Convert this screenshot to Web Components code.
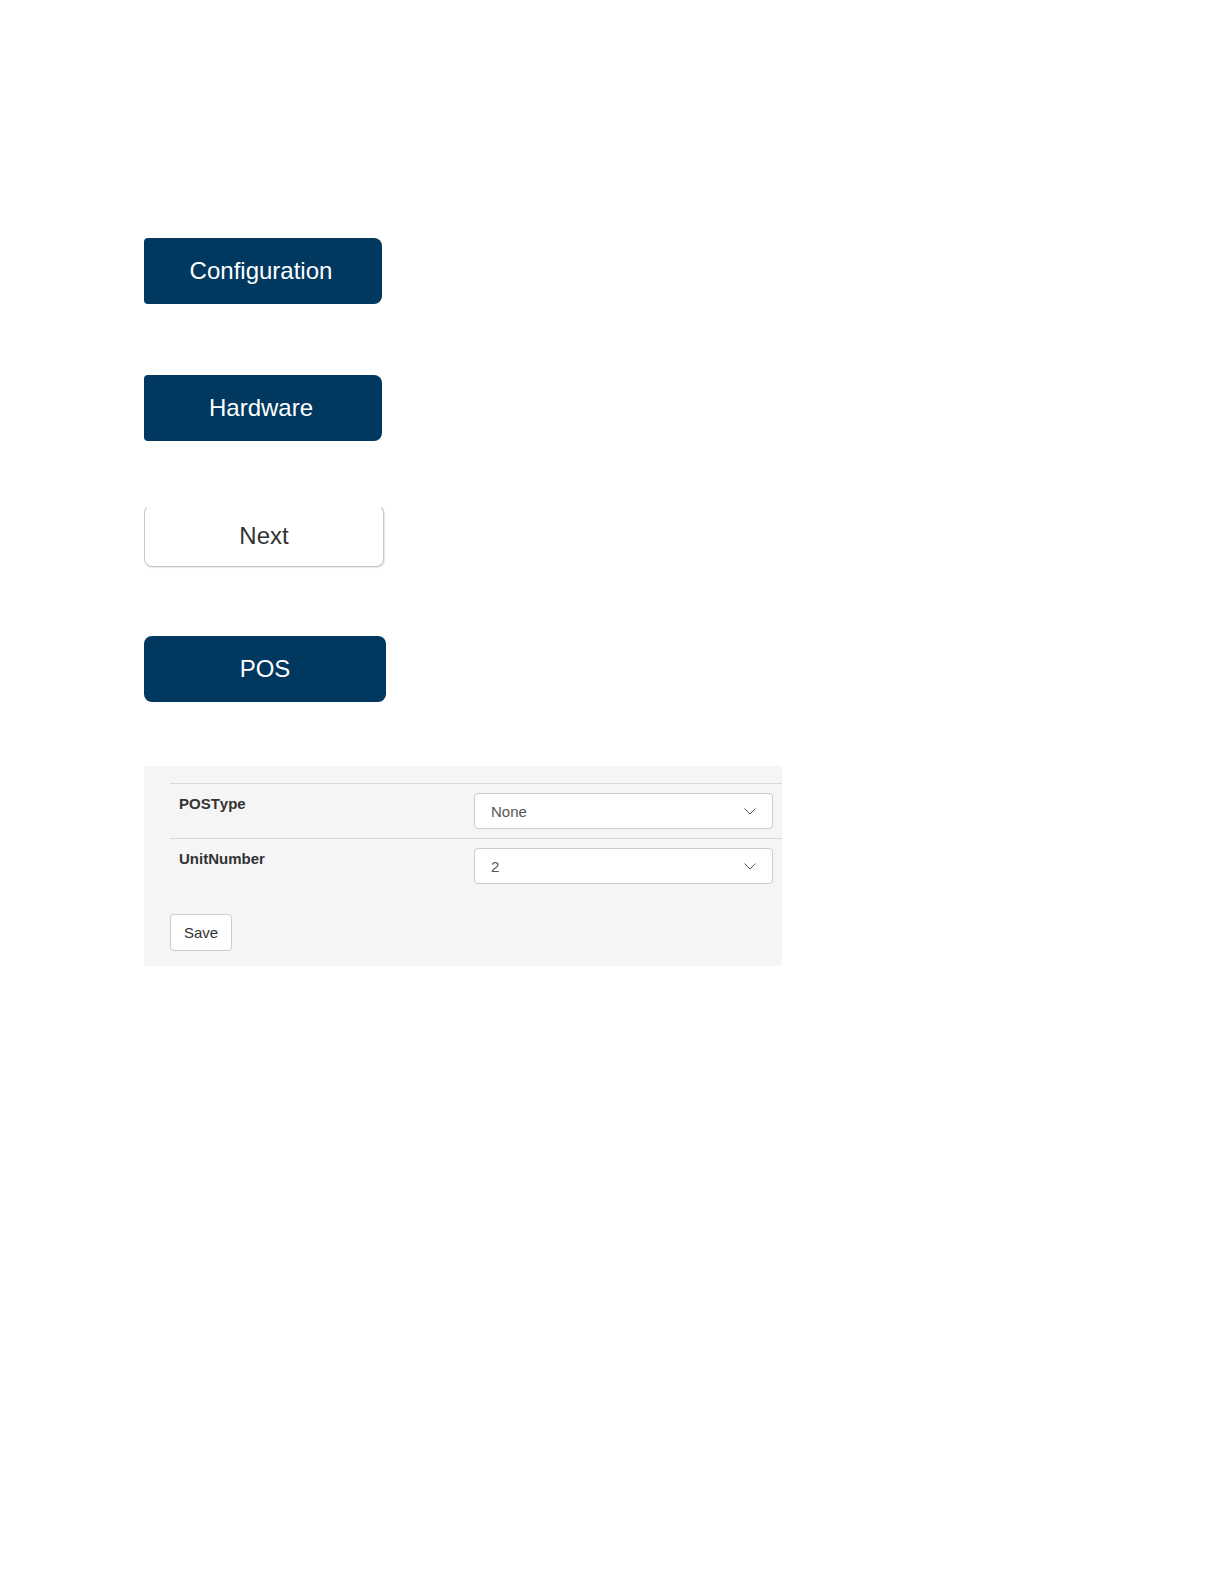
<!DOCTYPE html>
<html lang="en">
<head>
  <meta charset="UTF-8">
  <meta name="viewport" content="width=device-width, initial-scale=1">
  <title>POS configuration</title>
  <style>
    body {
      margin: 0;
      background: #fff;
      font-family: 'Liberation Sans', Arial, sans-serif;
      font-kerning: none;
    }
  </style>
</head>
<body>
  <config-page>
    <menu-button class="flush">Configuration</menu-button>
    <menu-button class="flush">Hardware</menu-button>
    <menu-button class="light">Next</menu-button>
    <menu-button>POS</menu-button>
    <pos-settings></pos-settings>
  </config-page>

  <script>
    class ConfigPage extends HTMLElement {
      constructor() {
        super();
        this.attachShadow({ mode: 'open' });
        this.shadowRoot.innerHTML = /* HTML */ `
          <style>
            :host {
              display: block;
              padding: 238px 144px 64px;
            }

            main {
              display: grid;
              grid-template-columns: minmax(0, 638px);
              grid-template-rows: 137px 130px 131px 130px auto;
              align-items: start;
              justify-items: start;
            }
          </style>
          <main><slot></slot></main>
        `;
      }
    }

    class MenuButton extends HTMLElement {
      constructor() {
        super();
        this.attachShadow({ mode: 'open' });
        this.shadowRoot.innerHTML = /* HTML */ `
          <style>
            :host {
              display: block;
              width: 100%;
              max-width: 242px;
            }

            :host(.flush) {
              max-width: 238px;
            }

            :host(.light) {
              max-width: 240px;
            }

            button {
              display: block;
              width: 100%;
              padding: 19px 8px;
              border: 0;
              border-radius: 8px;
              background: #003860;
              color: #fff;
              font: inherit;
              font-size: 24px;
              line-height: 28px;
              cursor: pointer;
            }

            :host(.flush) button {
              padding-right: 12px;
              border-radius: 4px 8px 8px 4px;
            }

            /* the top edge is left open */
            :host(.light) button {
              padding: 16px 8px;
              border: 1px solid #c6c6c6;
              border-top-color: transparent;
              background: #fff;
              color: #333;
              box-shadow: 1px 1px 1px #e6e6e6;
            }
          </style>
          <button type="button"><slot></slot></button>
        `;
      }
    }

    class PosSettings extends HTMLElement {
      constructor() {
        super();
        this.attachShadow({ mode: 'open' });
        this.shadowRoot.innerHTML = /* HTML */ `
          <style>
            :host {
              display: block;
              box-sizing: border-box;
              width: 100%;
              padding: 17px 0 15px 26px;
              background: #f5f5f5;
              color: #333;
              font-size: 15px;
              line-height: 21px;
            }

            table {
              width: 100%;
              border-collapse: separate;
              border-spacing: 0;
              table-layout: fixed;
            }

            th,
            td {
              padding: 9px;
              border-top: 1px solid #d9d9d9;
              text-align: left;
              vertical-align: top;
            }

            th {
              width: 277px;
            }

            .field {
              display: block;
              position: relative;
            }

            select {
              display: block;
              appearance: none;
              width: 100%;
              height: 36px;
              padding: 0 36px 0 16px;
              border: 1px solid #ccc;
              border-radius: 4px;
              background: #fff;
              color: #555;
              font: inherit;
            }

            svg {
              position: absolute;
              top: 14px;
              right: 16px;
              fill: none;
              stroke: #555;
              pointer-events: none;
            }

            button {
              display: block;
              margin-top: 21px;
              padding: 7px 13px;
              border: 1px solid #ccc;
              border-radius: 4px;
              background: #fff;
              color: #333;
              font: inherit;
              cursor: pointer;
            }
          </style>
          <form>
            <table>
              <tbody>
                <tr>
                  <th scope="row"><label for="posType">POSType</label></th>
                  <td>
                    <span class="field">
                      <select id="posType"><option>None</option></select>
                      <svg width="14" height="9" viewBox="0 0 14 9"><path d="M1.5 1.5 7 7l5.5-5.5"/></svg>
                    </span>
                  </td>
                </tr>
                <tr>
                  <th scope="row"><label for="unitNumber">UnitNumber</label></th>
                  <td>
                    <span class="field">
                      <select id="unitNumber">
                        <option>1</option>
                        <option selected>2</option>
                        <option>3</option>
                      </select>
                      <svg width="14" height="9" viewBox="0 0 14 9"><path d="M1.5 1.5 7 7l5.5-5.5"/></svg>
                    </span>
                  </td>
                </tr>
              </tbody>
            </table>
            <button type="submit">Save</button>
          </form>
        `;
      }

      connectedCallback() {
        this.shadowRoot.querySelector('form').addEventListener('submit', (e) => e.preventDefault());
      }
    }

    customElements.define('config-page', ConfigPage);
    customElements.define('menu-button', MenuButton);
    customElements.define('pos-settings', PosSettings);
  </script>
</body>
</html>
